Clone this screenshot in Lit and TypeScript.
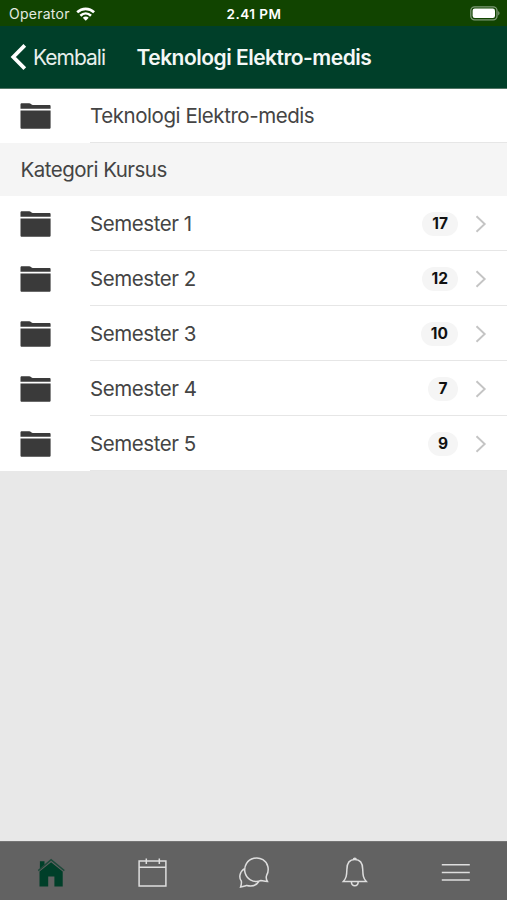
import { LitElement, html, css, svg } from "lit";
import { customElement, property } from "lit/decorators.js";

const folderIcon = html`<svg width="32" height="28" viewBox="0 0 32 28" fill="#3a3a3a">
  <path d="M1.5 6.8V2.6C1.5 1.7 2.1 1.2 2.9 1.2H10.1C10.9 1.2 11.4 1.5 12 2.1C12.6 2.7 13.1 3 13.9 3H30.4C31.2 3 31.6 3.5 31.6 4.2V6.8Z" />
  <path d="M1.5 8.4H31.6V25.4C31.6 26.3 31.1 26.8 30.3 26.8H2.8C2 26.8 1.5 26.3 1.5 25.4Z" />
</svg>`;

@customElement("status-bar")
class StatusBar extends LitElement {
  static styles = css`
    :host {
      display: grid;
      grid-template-columns: 1fr auto 1fr;
      align-items: center;
      box-sizing: border-box;
      height: 26px;
      padding: 1px 7px 0 9px;
      background: #114400;
      color: #fff;
      font-size: 14px;
    }
    .carrier { display: flex; align-items: center; gap: 6px; color: #e4ebe1; letter-spacing: 0.25px; }
    .time { font-weight: 600; font-size: 13.5px; letter-spacing: 0.5px; margin-right: 1px; }
    .battery { justify-self: end; }
    svg { display: block; }
  `;
  render() {
    return html`
      <div class="carrier">
        <span>Operator</span>
        <svg width="20" height="14" viewBox="0 0 20 14" fill="none" stroke="#fff" stroke-width="2.6">
          <path d="M1.2 5.3C6 .7 13.3 .7 18.1 5.3" />
          <path d="M4.4 8.7C7.5 5.8 11.9 5.8 15 8.7" />
          <path d="M9.75 13.7L6.8 10.8C8.5 9.2 11 9.2 12.7 10.8Z" fill="#fff" stroke="none" />
        </svg>
      </div>
      <div class="time">2.41 PM</div>
      <svg class="battery" width="30" height="15" viewBox="0 0 30 15">
        <rect x=".8" y=".8" width="26.2" height="13" rx="3.8" fill="none" stroke="#7f9a76" stroke-width="1.3" />
        <rect x="2.6" y="2.6" width="22.4" height="9.4" rx="2.2" fill="#fff" />
        <path d="M28.2 5C30 5.8 30 8.7 28.2 9.5Z" fill="#7f9a76" />
      </svg>
    `;
  }
}

@customElement("nav-header")
class NavHeader extends LitElement {
  static styles = css`
    :host {
      display: flex;
      align-items: center;
      box-sizing: border-box;
      height: 63px;
      padding: 0 11px 0 10px;
      border-bottom: 1px solid #517565;
      background: #003f29;
      color: #fff;
      white-space: nowrap;
    }
    .back { display: flex; align-items: center; gap: 6px; width: 126.5px; font-size: 21px; letter-spacing: -0.98px; color: #e8efec; }
    .title { font-size: 21px; font-weight: 600; letter-spacing: -0.5px; color: #f4f8f6; }
    svg { display: block; margin-bottom: 1px; }
  `;
  render() {
    return html`
      <div class="back">
        <svg width="17" height="26" viewBox="0 0 17 26" fill="none" stroke="#fff" stroke-width="3.8">
          <path d="M14.8 1.4L3.3 13L14.8 24.6" />
        </svg>
        <span>Kembali</span>
      </div>
      <div class="title">Teknologi Elektro-medis</div>
    `;
  }
}

@customElement("category-row")
class CategoryRow extends LitElement {
  @property() label = "";
  @property({ type: Number }) count?: number;
  static styles = css`
    :host { display: flex; align-items: stretch; height: 55px; padding-left: 19px; background: #fff; }
    .icon { display: flex; align-items: center; width: 71px; }
    .body {
      display: flex;
      align-items: center;
      flex: 1;
      box-sizing: border-box;
      padding: 1px 20px 0 0;
      border-bottom: 1px solid #e6e6e6;
    }
    :host(.current) .body { padding-top: 0; }
    :host(.current) .icon { height: 53px; }
    .label { flex: 1; font-size: 20.5px; letter-spacing: -0.44px; color: #444; white-space: nowrap; }
    .badge {
      box-sizing: border-box;
      min-width: 30px;
      height: 24px;
      margin-right: 17px;
      padding: 0 10px;
      border-radius: 12px;
      background: #f5f5f5;
      color: #111;
      font-size: 15.5px;
      font-weight: 700;
      line-height: 24px;
      text-align: center;
    }
    svg { display: block; }
  `;
  render() {
    return html`
      <div class="icon">${folderIcon}</div>
      <div class="body">
        <span class="label">${this.label}</span>
        ${this.count === undefined
          ? ""
          : html`<span class="badge">${this.count}</span>
              <svg width="12" height="18" viewBox="0 0 12 18" fill="none" stroke="#c4c4c4" stroke-width="1.9">
                <path d="M1.5 1.2L9.7 9L1.5 16.8" />
              </svg>`}
      </div>
    `;
  }
}

const tabs = [
  svg`<g fill="#003f29"><path d="M2.4 10.6V3.2H7V6.6L2.4 10.6Z"/><path d="M13.6 .8L27.3 12L26.4 13.2L13.6 2.8L1.2 13.2L.3 12Z" opacity=".7"/><path d="M2 13.6L13.6 4.2L25.2 13.6V28.4H16.9V18.4H10.7V28.4H2Z"/></g>`,
  svg`<path d="M.6 3H27.4V28H.6ZM.6 9.2H27.4M7.8 .6V6M20.8 .6V6"/>`,
  svg`<path d="M27.2 17.2C30.2 11.5 28.5 4.8 23.4 1.7C18-1.6 10.3 0 6.9 5.6C3.6 11.2 5.2 18.4 10.8 21.8C14 23.7 18 24 21.4 22.5C23.6 22.9 25.6 23.4 27.9 23.5C26.7 21.5 26.3 19.4 27.2 17.2Z"/><path d="M5.1 10.6C-.3 13.8-.6 20 1.8 23C2.3 25.2 1.7 27.2 1.1 29C3.4 28.6 5.2 28 7.2 27.4C12 28.5 17 27.4 19.3 23.5"/>`,
  svg`<path d="M14.3 1.6C8.8 1.6 6.5 5.6 6.4 11.2C6.2 17.3 5.9 20 2.8 23.6H25.8C22.7 20 22.4 17.3 22.2 11.2C22.1 5.6 19.8 1.6 14.3 1.6ZM10.9 24C11.1 29 17.5 29 17.7 24M12.9 1.6C13-.1 15.6-.1 15.7 1.6"/>`,
  svg`<path d="M.3 6.8H28.3M.3 14.5H28.3M.3 22H28.3"/>`,
];

@customElement("tab-bar")
class TabBar extends LitElement {
  static styles = css`
    :host {
      display: grid;
      grid-template-columns: repeat(5, 1fr);
      box-sizing: border-box;
      height: 59px;
      padding: 5px 0 0 1px;
      border-top: 1px solid #757575;
      background: #626262;
    }
    .tab { display: flex; align-items: center; justify-content: center; }
    svg { display: block; overflow: visible; fill: none; stroke: #dedede; stroke-width: 1.5; }
    .active { stroke: none; }
  `;
  render() {
    return tabs.map(
      (icon, i) => html`<div class="tab">
        <svg class=${i === 0 ? "active" : ""} width="30" height="31" viewBox="-.5 0 30 31">${icon}</svg>
      </div>`
    );
  }
}

@customElement("app-root")
class AppRoot extends LitElement {
  static styles = css`
    :host {
      display: flex;
      flex-direction: column;
      width: 507px;
      height: 900px;
      overflow: hidden;
      background: #e8e8e8;
      font-family: Inter, "Liberation Sans", sans-serif;
    }
    main { flex: 1; }
    .current { height: 54px; }
    .section {
      box-sizing: border-box;
      height: 53px;
      padding-left: 20.5px;
      background: #f5f5f5;
      color: #444;
      font-size: 20.5px;
      letter-spacing: -0.52px;
      line-height: 53px;
    }
  `;
  render() {
    const semesters = [17, 12, 10, 7, 9];
    return html`
      <status-bar></status-bar>
      <nav-header></nav-header>
      <main>
        <category-row class="current" label="Teknologi Elektro-medis"></category-row>
        <div class="section">Kategori Kursus</div>
        ${semesters.map((n, i) => html`<category-row label="Semester ${i + 1}" .count=${n}></category-row>`)}
      </main>
      <tab-bar></tab-bar>
    `;
  }
}
